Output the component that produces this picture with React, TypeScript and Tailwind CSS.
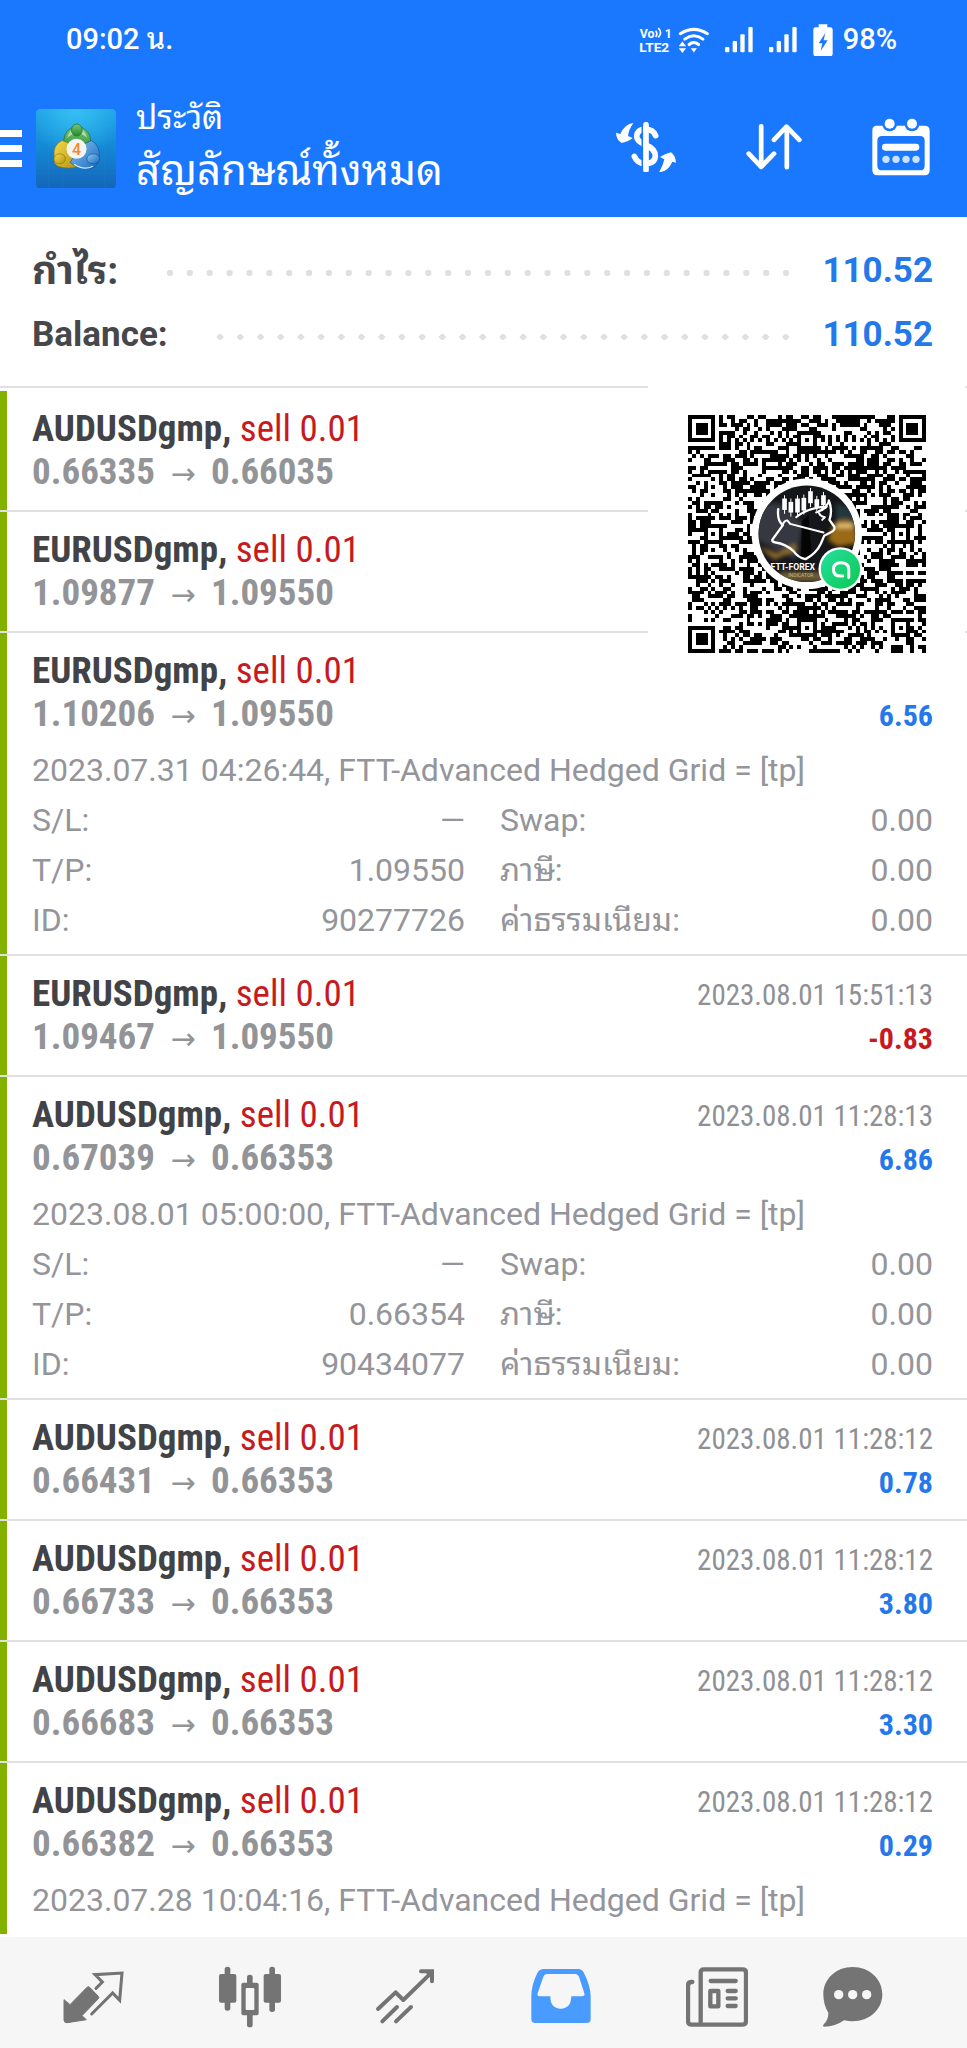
import type { ReactNode } from 'react'

/* ---------------------------------------------------------------------------
   Trade history screen: status bar, toolbar, totals, deal list, tab bar.
--------------------------------------------------------------------------- */

type Details = {
  comment: string
  tp?: string
  id?: string
}

type Deal = {
  symbol: string
  from: string
  to: string
  time?: string
  profit?: string
  details?: Details
}

const COMMENT = 'FTT-Advanced Hedged Grid = [tp]'

const deals: Deal[] = [
  { symbol: 'AUDUSDgmp', from: '0.66335', to: '0.66035' },
  { symbol: 'EURUSDgmp', from: '1.09877', to: '1.09550' },
  {
    symbol: 'EURUSDgmp',
    from: '1.10206',
    to: '1.09550',
    profit: '6.56',
    details: { comment: `2023.07.31 04:26:44, ${COMMENT}`, tp: '1.09550', id: '90277726' },
  },
  { symbol: 'EURUSDgmp', from: '1.09467', to: '1.09550', time: '2023.08.01 15:51:13', profit: '-0.83' },
  {
    symbol: 'AUDUSDgmp',
    from: '0.67039',
    to: '0.66353',
    time: '2023.08.01 11:28:13',
    profit: '6.86',
    details: { comment: `2023.08.01 05:00:00, ${COMMENT}`, tp: '0.66354', id: '90434077' },
  },
  { symbol: 'AUDUSDgmp', from: '0.66431', to: '0.66353', time: '2023.08.01 11:28:12', profit: '0.78' },
  { symbol: 'AUDUSDgmp', from: '0.66733', to: '0.66353', time: '2023.08.01 11:28:12', profit: '3.80' },
  { symbol: 'AUDUSDgmp', from: '0.66683', to: '0.66353', time: '2023.08.01 11:28:12', profit: '3.30' },
  {
    symbol: 'AUDUSDgmp',
    from: '0.66382',
    to: '0.66353',
    time: '2023.08.01 11:28:12',
    profit: '0.29',
    details: { comment: `2023.07.28 10:04:16, ${COMMENT}` },
  },
]

/* --------------------------------- Status bar ------------------------------ */

function SignalBars() {
  return (
    <svg viewBox="0 0 84 76" className="w-7 fill-white" aria-hidden="true">
      <rect x="0" y="60" width="13" height="16" rx="3" />
      <rect x="23" y="42" width="13" height="34" rx="3" />
      <rect x="46" y="22" width="13" height="54" rx="3" />
      <rect x="70" y="0" width="13" height="76" rx="3" />
    </svg>
  )
}

function StatusBar() {
  return (
    <div className="flex h-20 items-center pr-[70px] pl-[66px] text-[29px] font-medium">
      <time className="grow">09:02 น.</time>
      <svg viewBox="239 74 108 84" className="w-9 fill-white" aria-hidden="true">
        <g fontFamily="Roboto, sans-serif" fontWeight="700">
          <text x="244" y="110" fontSize="37">Vo</text>
          <text x="319" y="110" fontSize="37">1</text>
          <text x="243" y="152" fontSize="41">LTE2</text>
        </g>
        <path d="M292 88q7 9 0 19M300 80q13 14 0 28" fill="none" stroke="#fff" strokeWidth="5" />
      </svg>
      <svg viewBox="360 76 92 80" className="ml-1 w-[31px]" fill="none" stroke="#fff" strokeLinecap="round" aria-hidden="true">
        <path d="M367 96q40-26 80 0" strokeWidth="9" />
        <path d="M380 112q27-20 54 0" strokeWidth="9" />
        <path d="M393 128q14-12 28 0" strokeWidth="9" />
        <path d="M398 139h18l-9 13z" fill="#fff" stroke="none" />
        <path d="M373 119l11 14h-22zM373 153l11-14h-22z" fill="#fff" stroke="none" />
      </svg>
      <div className="ml-4 flex gap-4">
        <SignalBars />
        <SignalBars />
      </div>
      <svg viewBox="760 68 60 98" className="ml-4 w-5" aria-hidden="true">
        <path d="M777 69h26v9h9q7 0 7 7v72q0 8-8 8h-42q-8 0-8-8V85q0-7 7-7h9z" fill="#fff" />
        <path d="M797 95l-20 31h11l-5 23 21-32h-12z" fill="#1a78ff" />
      </svg>
      <span className="ml-[10px]">98%</span>
    </div>
  )
}

/* ---------------------------------- Toolbar -------------------------------- */

function AppLogo() {
  return (
    <svg viewBox="108 323 239 238" className="w-20" role="img" aria-label="MetaTrader 4">
      <defs>
        <linearGradient id="tile" x1="0" y1="0" x2="0" y2="1">
          <stop offset="0" stopColor="#1fa3e6" />
          <stop offset=".5" stopColor="#1487d4" />
          <stop offset="1" stopColor="#1465b8" />
        </linearGradient>
        <radialGradient id="glow" cx=".5" cy="0" r=".6">
          <stop offset="0" stopColor="#35c0f2" />
          <stop offset="1" stopColor="#35c0f2" stopOpacity="0" />
        </radialGradient>
        <linearGradient id="green" x1="0" y1="0" x2="0" y2="1">
          <stop offset="0" stopColor="#7cc576" />
          <stop offset="1" stopColor="#1f8a2e" />
        </linearGradient>
        <linearGradient id="yellow" x1="0" y1="0" x2="1" y2="1">
          <stop offset="0" stopColor="#f3dc4e" />
          <stop offset="1" stopColor="#b7920b" />
        </linearGradient>
        <linearGradient id="blue" x1="0" y1="0" x2="1" y2="1">
          <stop offset="0" stopColor="#8cc9f2" />
          <stop offset="1" stopColor="#1668bd" />
        </linearGradient>
      </defs>
      <rect x="108" y="323" width="239" height="238" rx="13" fill="url(#tile)" />
      <rect x="108" y="323" width="239" height="238" rx="13" fill="url(#glow)" />
      <path d="M145 323v238M188 323v238M312 323v238M108 373h239M108 415h239M108 515h239" stroke="#4fb5ee" strokeOpacity=".25" />
      <circle cx="231" cy="416" r="40" fill="url(#green)" stroke="#1b6b35" strokeWidth="2" />
      <path d="M201 410q6-28 30-28t30 28q-12-14-30-14t-30 14z" fill="#c8ebb8" opacity=".75" />
      <path d="M186 417q-28 12-24 50-4 20 14 28 36 10 58-2l-10-60z" fill="url(#yellow)" stroke="#8a7413" strokeWidth="2" />
      <path d="M274 417q28 16 22 54-2 22-24 30-34 4-62-18l30-50z" fill="url(#blue)" stroke="#15509a" strokeWidth="2" />
      <path d="M222 488q28 20 56 6" fill="none" stroke="#d0edff" strokeWidth="4" />
      <ellipse cx="230" cy="386" rx="16" ry="18" fill="url(#green)" stroke="#1b6b35" strokeWidth="2" />
      <ellipse cx="179" cy="472" rx="17" ry="15" fill="url(#yellow)" stroke="#8a7413" strokeWidth="2" />
      <ellipse cx="279" cy="472" rx="19" ry="15" fill="url(#blue)" stroke="#15509a" strokeWidth="2" />
      <circle cx="229" cy="442" r="30" fill="#f6f4f2" />
      <text x="229" y="459" textAnchor="middle" fontFamily="Roboto, sans-serif" fontWeight="500" fontSize="48" fill="#f08a2c">
        4
      </text>
    </svg>
  )
}

function ToolButton({ label, children }: { label: string; children: ReactNode }) {
  return (
    <button type="button" aria-label={label} className="shrink-0">
      {children}
    </button>
  )
}

function Toolbar() {
  return (
    <div className="flex h-[137px] items-center pr-[37px]">
      <button type="button" aria-label="Menu" className="flex w-[22px] flex-col gap-2">
        <span className="h-[7px] bg-white" />
        <span className="h-[7px] bg-white" />
        <span className="h-[7px] bg-white" />
      </button>
      <div className="ml-[14px] shrink-0">
        <AppLogo />
      </div>
      <div className="ml-5 grow pb-2 whitespace-nowrap">
        <p className="text-[33px] leading-[52px]">ประวัติ</p>
        <h1 className="text-[42px] leading-[54px]">สัญลักษณ์ทั้งหมด</h1>
      </div>
      <div className="flex items-center gap-[70px] pb-[3px]">
        <ToolButton label="Deals and balance operations">
          <svg viewBox="167 366 180 152" className="w-[60px]" fill="none" stroke="#fff" aria-hidden="true">
            <path d="M286 407q-7-19-31-19-25 0-26 21 0 15 27 26 29 11 29 34-2 22-30 22-24 0-33-22" strokeWidth="17" strokeLinecap="round" />
            <path d="M246 366v152" stroke="#1a78ff" strokeWidth="5" />
            <path d="M257 374v136" strokeWidth="17" strokeLinecap="round" />
            <path d="M219 369q-26 3-39 33l-13-4q1 22 17 31 22-5 33-15l-14-6q2-19 16-39z" fill="#fff" stroke="none" />
            <path d="M296 517q28-3 40-32l11 3q-1-21-15-31-20 5-33 14l13 7q-3 18-16 39z" fill="#fff" stroke="none" />
          </svg>
        </ToolButton>
        <ToolButton label="Sort">
          <svg viewBox="560 372 166 140" className="w-14" fill="none" stroke="#fff" strokeWidth="14" strokeLinecap="round" strokeLinejoin="round" aria-hidden="true">
            <path d="M605 382v119M568 463l37 39 38-39" />
            <path d="M681 503V384M643 422l37-39 38 39" />
          </svg>
        </ToolButton>
        <ToolButton label="Period">
          <svg viewBox="938 352 174 174" className="w-[58px]" aria-hidden="true">
            <path d="M952 375h144q15 0 15 15v119q0 15-15 15H954q-15 0-15-15V390q0-15 13-15zM968 406q-14 0-14 14v75q0 14 14 14h114q14 0 14-14v-75q0-14-14-14z" fill="#fff" fillRule="evenodd" />
            <circle cx="991" cy="370" r="22" fill="#1a78ff" />
            <circle cx="1058" cy="370" r="22" fill="#1a78ff" />
            <circle cx="991" cy="369" r="15" fill="#fff" />
            <circle cx="1058" cy="369" r="15" fill="#fff" />
            <rect x="968" y="429" width="112" height="21" rx="10" fill="#fff" />
            <g fill="#cbe2ff">
              <circle cx="980" cy="476" r="11" />
              <circle cx="1010" cy="476" r="11" />
              <circle cx="1040" cy="476" r="11" />
              <circle cx="1070" cy="476" r="11" />
            </g>
          </svg>
        </ToolButton>
      </div>
    </div>
  )
}

/* ---------------------------------- Totals --------------------------------- */

function Total({ label, value, labelSize = '' }: { label: string; value: string; labelSize?: string }) {
  return (
    <div className="flex h-16 items-center text-[35px] leading-[64px] font-bold">
      <dt className={`text-[#46474b] ${labelSize}`}>{label}</dt>
      <div className="mt-1 mr-[26px] ml-[42px] h-[6px] grow bg-[radial-gradient(circle,#e0e0e2_3px,transparent_3px)] bg-[length:20px_6px] bg-repeat-round" />
      <dd className="text-[#2478ea]">{value}</dd>
    </div>
  )
}

/* --------------------------------- Deal list ------------------------------- */

function Detail({ label, value }: { label: string; value: string }) {
  return (
    <div className="flex justify-between">
      <dt>{label}</dt>
      <dd>{value}</dd>
    </div>
  )
}

function DealRow({ deal }: { deal: Deal }) {
  const { details } = deal
  return (
    <li className="border-t-2 border-[#e0e0e2] first:border-transparent last:grow">
      <div
        className={`h-full border-l-7 border-[#83b100] pt-4 pr-[34px] pl-[25px] ${details ? 'pb-[9px]' : 'pb-[17px]'}`}
      >
        <div className="flex h-[86px] justify-between font-['Roboto_Condensed','Roboto',sans-serif] whitespace-nowrap">
          <div className="text-[37px] leading-[43px] font-bold">
            <p className="text-[#424347]">
              {deal.symbol}, <span className="font-normal text-[#c71a20]">sell 0.01</span>
            </p>
            <p className="flex h-[43px] items-center text-[#939498]">
              {deal.from}
              <span className="mx-[15px] w-[26px] pt-1 text-center font-['DejaVu_Sans',sans-serif] text-[30px] leading-none font-normal">
                →
              </span>
              {deal.to}
            </p>
          </div>
          <div className="pt-[2px] text-right text-[29px] leading-[43px]">
            <p className="h-[43px] text-[#8f9094]">{deal.time}</p>
            <p className={`text-[30px] font-bold ${deal.profit?.startsWith('-') ? 'text-[#c71a20]' : 'text-[#2478ea]'}`}>
              {deal.profit}
            </p>
          </div>
        </div>
        {details && (
          <div className="mt-[10px] text-[32px] leading-[50px] text-[#94959a]">
            <p className="whitespace-nowrap">{details.comment}</p>
            {details.id && (
              <dl className="grid grid-cols-2 gap-x-[35px]">
                <Detail label="S/L:" value="—" />
                <Detail label="Swap:" value="0.00" />
                <Detail label="T/P:" value={details.tp ?? '—'} />
                <Detail label="ภาษี:" value="0.00" />
                <Detail label="ID:" value={details.id} />
                <Detail label="ค่าธรรมเนียม:" value="0.00" />
              </dl>
            )}
          </div>
        )}
      </div>
    </li>
  )
}

/* ---------------------------------- QR card -------------------------------- */

const QR_SIZE = 61
const QR_ALIGN = [6, 30, 54]

/* Finder, alignment and timing patterns are exact; the rest is seeded fill. */
function qrPath() {
  let seed = 20230801
  const noise = () => {
    seed = (Math.imul(seed, 1664525) + 1013904223) >>> 0
    return seed / 4294967296
  }
  const last = QR_SIZE - 7
  const dark = (x: number, y: number) => {
    const random = noise() < 0.52
    for (const [fx, fy] of [[0, 0], [last, 0], [0, last]]) {
      const d = Math.max(Math.abs(x - fx - 3), Math.abs(y - fy - 3))
      if (d <= 4) return d !== 2 && d !== 4
    }
    for (const ax of QR_ALIGN) {
      for (const ay of QR_ALIGN) {
        const d = Math.max(Math.abs(x - ax), Math.abs(y - ay))
        const corner = (ax === 6 && ay !== 30) || (ay === 6 && ax !== 30)
        if (d <= 2 && !corner) return d !== 1
      }
    }
    if (x === 6) return y % 2 === 0
    if (y === 6) return x % 2 === 0
    return random
  }
  let d = ''
  for (let y = 0; y < QR_SIZE; y++) {
    for (let x = 0; x < QR_SIZE; x++) {
      if (dark(x, y)) d += `M${x} ${y}h1v1h-1z`
    }
  }
  return d
}

const QR_PATH = qrPath()

const CANDLES = [
  [435, 386, 34],
  [454, 396, 32],
  [474, 386, 42],
  [493, 384, 38],
  [513, 364, 36],
  [532, 388, 24],
  [552, 376, 30],
]

function QrCode() {
  return (
    <svg viewBox="145 135 715 715" className="w-full" role="img" aria-label="QR code">
      <defs>
        <clipPath id="avatar">
          <circle cx="502" cy="492" r="145" />
        </clipPath>
        <linearGradient id="badge" x1="0" y1="0" x2="1" y2="1">
          <stop offset="0" stopColor="#25e0a0" />
          <stop offset="1" stopColor="#0cc850" />
        </linearGradient>
        <filter id="soft">
          <feGaussianBlur stdDeviation="7" />
        </filter>
      </defs>
      <path d={QR_PATH} transform="translate(145 135) scale(11.72)" shapeRendering="crispEdges" />
      <circle cx="502" cy="492" r="166" fill="#fff" />
      <g clipPath="url(#avatar)">
        <rect x="350" y="340" width="310" height="310" fill="#15161a" />
        <g filter="url(#soft)">
          <path d="M350 400h70l70 60-20 110-120-60z" fill="#353941" />
          <path d="M590 400l70 20v80l-70-30z" fill="#20383c" />
          <path d="M355 530l60 20 50-30 10 20-70 30z" fill="#8a6a2c" />
          <path d="M575 480q10-30 40-30t30 30l10 40-60 10-30-20z" fill="#9a6b12" />
          <path d="M590 468h50" stroke="#e9c77a" strokeWidth="12" />
          <path d="M420 605h150v30H420z" fill="#6b5a34" />
        </g>
        <path d="M487 455l20-20 10 130h-32z" fill="#050506" />
        <g stroke="#fff" fill="#fff">
          {CANDLES.map(([x, y, h]) => (
            <g key={x}>
              <path d={`M${x} ${y - 10}v${h + 22}`} strokeWidth="3" />
              <rect x={x - 7} y={y} width="14" height={h} stroke="none" />
            </g>
          ))}
        </g>
        <g fill="none" stroke="#fff" strokeWidth="7" strokeLinejoin="round" strokeLinecap="round">
          <path d="M416 418q-4 34 14 48l-32 44q0 8 10 8 30 4 54 26 14 20 36 24 32-16 46-46l10-24 26-14q8-6 4-14l-14-20q10-28-2-58" />
          <path d="M428 468q6-18 16-16l8 10 100 26M470 442q32-28 92-32-14 14-32 18M568 394q-4 16-30 30 0 14 18 18l-8 8" strokeWidth="6" />
        </g>
        <g fill="#fff" fontFamily="Roboto, sans-serif" textAnchor="middle">
          <text x="460" y="601" fontSize="26" fontWeight="700">FTT-FOREX</text>
          <text x="484" y="622" fontSize="15" fill="#c9b98d">INDICATOR</text>
        </g>
      </g>
      <circle cx="603" cy="598" r="66" fill="#fff" />
      <circle cx="603" cy="598" r="59" fill="url(#badge)" />
      <path d="M628 623v-24q0-20-24-20-22 0-22 20 0 20 22 20h6" fill="none" stroke="#fff" strokeWidth="9" strokeLinecap="round" />
    </svg>
  )
}

/* ---------------------------------- Tab bar -------------------------------- */

function Tab({ label, active, className = 'grow basis-0', children }: {
  label: string
  active?: boolean
  className?: string
  children: ReactNode
}) {
  return (
    <a
      href={`#${label.toLowerCase()}`}
      aria-label={label}
      aria-current={active ? 'page' : undefined}
      className={`flex justify-center ${active ? 'text-[#4a9bff]' : 'text-[#747474]'} ${className}`}
    >
      {children}
    </a>
  )
}

function TabBar() {
  return (
    <nav className="flex h-[111px] items-center bg-[#f6f6f6] pt-2 pr-[55px] pl-4">
      <Tab label="Quotes">
        <svg viewBox="192 138 186 186" className="w-[62px]" aria-hidden="true">
          <path d="M264 202q4-4 8 0l26 27q3 4 0 7l-49 51 13 12-57 9q-10 1-10-8v-61l18 15z" fill="currentColor" stroke="currentColor" strokeWidth="3" strokeLinejoin="round" />
          <path d="M278 282l63-63 21 22 7-82-81 5 22 22-19 19" fill="none" stroke="currentColor" strokeWidth="9" strokeLinecap="round" />
        </svg>
      </Tab>
      <Tab label="Charts">
        <svg viewBox="656 138 186 186" className="w-[62px]" fill="currentColor" aria-hidden="true">
          <rect x="656" y="162" width="52" height="86" rx="6" />
          <rect x="673" y="140" width="17" height="132" rx="8" />
          <rect x="790" y="162" width="52" height="86" rx="6" />
          <rect x="807" y="140" width="17" height="136" rx="8" />
          <rect x="740" y="164" width="17" height="30" rx="8" />
          <rect x="740" y="278" width="17" height="44" rx="8" />
          <path d="M729 188h40q6 0 6 6v86q0 6-6 6h-40q-6 0-6-6v-86q0-6 6-6zm10 16q-3 0-3 3v60q0 3 3 3h20q3 0 3-3v-60q0-3-3-3z" fillRule="evenodd" />
        </svg>
      </Tab>
      <Tab label="Trade">
        <svg viewBox="1122 138 186 186" className="w-[62px]" fill="none" stroke="currentColor" strokeWidth="12" strokeLinecap="round" strokeLinejoin="round" aria-hidden="true">
          <path d="M1134 267l53-50 23 23 82-80" />
          <path d="M1147 304l44-43M1188 304l45-43" />
          <path d="M1263 154h33v30" strokeLinejoin="miter" />
          <path d="M1274 152l24 24v-24z" fill="currentColor" strokeWidth="4" />
        </svg>
      </Tab>
      <Tab label="History" active>
        <svg viewBox="138 138 186 186" className="w-[62px]" fill="currentColor" aria-hidden="true">
          <path d="M180 147h102q12 0 18 12 20 40 20 70v68q0 12-12 12H154q-12 0-12-12v-68q0-34 18-70 6-12 20-12zm9 15q-8 0-11 8l-17 50q-3 9 6 9h32q0 37 31 37t32-37h31q11 0 8-9l-16-50q-3-8-11-8z" fillRule="evenodd" />
        </svg>
      </Tab>
      <Tab label="News">
        <svg viewBox="606 136 186 186" className="w-[62px]" fill="none" stroke="currentColor" strokeWidth="13" strokeLinecap="round" strokeLinejoin="round" aria-hidden="true">
          <path d="M650 312V156q0-10 10-10h116q10 0 10 10v145q0 11-11 11H623q-11 0-11-11V195q0-11 11-11h2" />
          <path d="M680 181h75M731 211h24M731 233h24M731 256h24" />
          <rect x="679" y="211" width="24" height="46" />
        </svg>
      </Tab>
      <Tab label="Messages" className="w-[117px]">
        <svg viewBox="1016 136 186 186" className="w-[62px]" aria-hidden="true">
          <path d="M1108 139c50 0 89 36 89 82s-39 81-89 81q-13 0-26-3-26 19-60 19-6-1 0-8 14-15 13-34-15-23-15-55c0-46 38-82 88-82z" fill="currentColor" />
          <g fill="#f6f6f6">
            <circle cx="1066" cy="222" r="14" />
            <circle cx="1108" cy="222" r="14" />
            <circle cx="1150" cy="222" r="14" />
          </g>
        </svg>
      </Tab>
    </nav>
  )
}

export default function App() {
  return (
    <div className="flex min-h-screen flex-col bg-white font-['Roboto','Noto_Sans_Thai_Looped','Loma','Garuda','Waree','Noto_Sans_Thai',sans-serif]">
      <header className="bg-[#1a78ff] text-white">
        <StatusBar />
        <Toolbar />
      </header>
      <dl className="border-b-2 border-[#e0e0e2] pt-[22px] pr-[34px] pb-[19px] pl-8">
        <Total label="กำไร:" value="110.52" labelSize="text-[39px]" />
        <Total label="Balance:" value="110.52" />
      </dl>
      <main className="relative flex grow flex-col pt-px">
        <ul className="flex grow flex-col">
          {deals.map((deal, i) => (
            <DealRow key={i} deal={deal} />
          ))}
        </ul>
        <aside className="absolute -top-[3px] right-[2px] w-[317px] bg-white pt-[30px] pr-[39px] pb-3 pl-[40px]">
          <QrCode />
        </aside>
      </main>
      <TabBar />
    </div>
  )
}
